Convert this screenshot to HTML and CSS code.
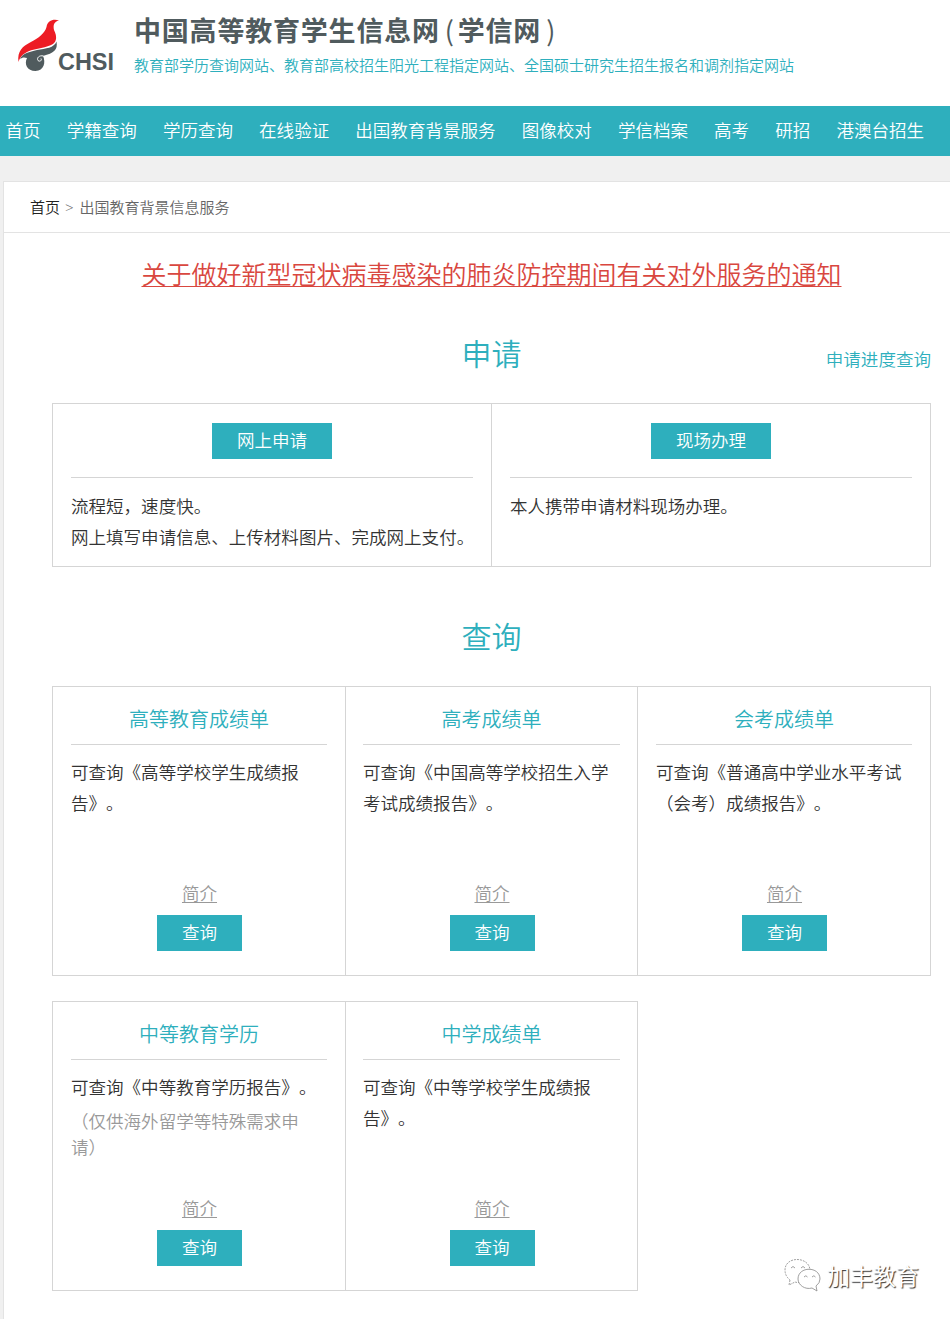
FILE: index.html
```html
<!DOCTYPE html>
<html lang="zh-CN">
<head>
<meta charset="UTF-8">
<meta name="viewport" content="width=device-width, initial-scale=1.0">
<title>出国教育背景信息服务</title>
<link rel="stylesheet" href="styles.css">
</head>
<body>
  <header class="header">
    <svg class="logo" width="102" height="58" viewBox="0 0 102 58">
      <path d="M1.5 44 C0 33 6 28 13 24.5 C22 20 28 15 29.5 9 C30.5 3 36 0.500 42 2.500 C37 3.500 36 7 37 12 C40 18 40 23 36 26 C30 30 19 30 11 33.5 C6 36 3 39 1.5 44Z" fill="#ed1c24"/>
      <path d="M39.5 23.5 C41 32 37 35 26 38 C29 44 27 53 18.5 53 C10 53 7 46 10 40 C7 39 5 39.500 3 41 C6 35 12 34 20 32 C29 30.500 37 30 39.5 23.5Z" fill="#505b5e"/>
      <path d="M26.500 38 C22 37 19.500 40 21 42.500 C23 44 25 42.500 24 40.500" fill="none" stroke="#fff" stroke-width="1"/>
      <text x="41" y="52" class="logo-text" textLength="56" lengthAdjust="spacingAndGlyphs">CHSI</text>
    </svg>
    <div class="site-name">
      <h1>中国高等教育学生信息网<span class="paren-left">(</span>学信网<span class="paren-right">)</span></h1>
      <p>教育部学历查询网站、教育部高校招生阳光工程指定网站、全国硕士研究生招生报名和调剂指定网站</p>
    </div>
  </header>

  <nav class="nav">
    <a>首页</a>
    <a>学籍查询</a>
    <a>学历查询</a>
    <a>在线验证</a>
    <a>出国教育背景服务</a>
    <a>图像校对</a>
    <a>学信档案</a>
    <a>高考</a>
    <a>研招</a>
    <a>港澳台招生</a>
  </nav>

  <main class="main">
    <div class="breadcrumb"><a>首页</a><span class="arrow">&gt;</span><span>出国教育背景信息服务</span></div>

    <div class="content">
      <a class="notice">关于做好新型冠状病毒感染的肺炎防控期间有关对外服务的通知</a>

      <div class="section-title">
        <h2>申请</h2>
        <a class="progress">申请进度查询</a>
      </div>
      <div class="grid apply">
        <div class="card">
          <div class="card-head"><a class="btn btn-wide">网上申请</a></div>
          <p>流程短，速度快。<br>网上填写申请信息、上传材料图片、完成网上支付。</p>
        </div>
        <div class="card">
          <div class="card-head"><a class="btn btn-wide">现场办理</a></div>
          <p>本人携带申请材料现场办理。</p>
        </div>
      </div>

      <div class="section-title query-title">
        <h2>查询</h2>
      </div>
      <div class="grid query">
        <div class="card">
          <h3>高等教育成绩单</h3>
          <p>可查询《高等学校学生成绩报告》。</p>
          <div class="card-foot"><a class="intro">简介</a><a class="btn">查询</a></div>
        </div>
        <div class="card">
          <h3>高考成绩单</h3>
          <p>可查询《中国高等学校招生入学考试成绩报告》。</p>
          <div class="card-foot"><a class="intro">简介</a><a class="btn">查询</a></div>
        </div>
        <div class="card">
          <h3>会考成绩单</h3>
          <p>可查询《普通高中学业水平考试（会考）成绩报告》。</p>
          <div class="card-foot"><a class="intro">简介</a><a class="btn">查询</a></div>
        </div>
      </div>
      <div class="grid query query-two">
        <div class="card">
          <h3>中等教育学历</h3>
          <p>可查询《中等教育学历报告》。</p>
          <p class="tip">（仅供海外留学等特殊需求申请）</p>
          <div class="card-foot"><a class="intro">简介</a><a class="btn">查询</a></div>
        </div>
        <div class="card">
          <h3>中学成绩单</h3>
          <p>可查询《中等学校学生成绩报告》。</p>
          <div class="card-foot"><a class="intro">简介</a><a class="btn">查询</a></div>
        </div>
      </div>
    </div>
  </main>

  <div class="watermark">
    <svg width="38" height="34" viewBox="0 0 38 34" fill="#fff" stroke="#888" stroke-width="0.8">
      <path d="M6 22 L5 27 L11 24 C16 26 27 23 26 12 C25 -2 1 -2 1 12 Q1 18 6 22Z" stroke-dasharray="2 1"/>
      <path d="M32 28 L33 33 L28 30 C21 32 14 27 14 21 C14 8 36 8 36 21 Q36 25 32 28Z"/>
      <path d="M7 10 q2 -3 4 0 M17 10 q2 -3 4 0 M20 19 q2 -2.5 3.5 0 M28 19 q2 -2.5 3.5 0" fill="none"/>
    </svg>
    <span>加丰教育</span>
  </div>
</body>
</html>
```
FILE: styles.css
```css
* {
  box-sizing: border-box;
}

body {
  margin: 0;
  height: 1319px;
  position: relative;
  overflow: hidden;
  display: flex;
  flex-direction: column;
  background-color: #f0f0f0;
  font-family: "Noto Sans CJK SC", sans-serif;
  font-size: 17.55px;
  font-weight: 350;
  color: #333;
  text-spacing-trim: space-all;
}

h1, h2, h3, p {
  margin: 0;
  font-weight: 350;
}

.header {
  height: 106px;
  flex: none;
  display: flex;
  background-color: #fff;
}

.logo {
  margin: 18px 15px 0 17px;
}

.logo-text {
  font-family: "Liberation Sans", sans-serif;
  font-size: 24px;
  font-weight: bold;
  fill: #505b5e;
}

.site-name h1 {
  margin-top: 12px;
  height: 36px;
  line-height: 36px;
  font-size: 27px;
  font-weight: 700;
  letter-spacing: 0.8px;
  color: #505b5e;
  white-space: nowrap;
}

.paren-left {
  margin: 0 3px 0 5px;
  font-weight: 400;
}

.paren-right {
  margin-left: 5px;
  font-weight: 400;
}

.site-name p {
  font-size: 15px;
  line-height: 34px;
  color: #2eafbd;
  white-space: nowrap;
}

.nav {
  height: 50px;
  flex: none;
  display: flex;
  gap: 26.1px;
  padding-left: 5.5px;
  background-color: #2eafbd;
  color: #fff;
  line-height: 47px;
  white-space: nowrap;
}

.main {
  flex: 1;
  margin: 25px 0 0 3px;
  border: 1px solid #e3e3e3;
  border-width: 1px 0 0 1px;
  background-color: #fff;
}

.breadcrumb {
  height: 51px;
  padding-left: 26px;
  border-bottom: 1px solid #e3e3e3;
  font-size: 15px;
  line-height: 49px;
  color: #666;
}

.breadcrumb a {
  color: #222;
}

.arrow {
  margin: 0 6px 0 5px;
  font-family: "Open Sans", sans-serif;
}

.content {
  padding: 0 19px 0 48px;
}

.notice {
  display: block;
  height: 85px;
  line-height: 80px;
  font-size: 25px;
  text-align: center;
  text-decoration: underline;
  text-decoration-thickness: 1px;
  text-underline-offset: 2px;
  color: #d9473f;
}

.section-title {
  display: grid;
  grid-template-columns: 1fr auto 1fr;
  height: 85px;
  line-height: 68px;
  color: #2eafbd;
}

.section-title h2 {
  grid-column: 2;
  font-size: 30px;
}

.progress {
  text-align: right;
  line-height: 82px;
}

.query-title {
  margin-top: 34px;
}

.grid {
  display: grid;
  width: 879px;
  border: 1px solid #d5d5d5;
}

.card {
  padding: 0 18px;
  border-left: 1px solid #d5d5d5;
  display: flex;
  flex-direction: column;
}

.card:first-child {
  border-left: none;
}

.card p {
  line-height: 31px;
}

.apply {
  grid-template-columns: 438px 1fr;
  height: 164px;
}

.apply p {
  white-space: nowrap;
}

.card-head {
  height: 74px;
  margin-bottom: 12px;
  padding-top: 19px;
  border-bottom: 1px solid #d5d5d5;
  text-align: center;
}

.btn {
  display: inline-block;
  width: 85px;
  height: 36px;
  line-height: 34px;
  background-color: #2eafbd;
  color: #fff;
  text-align: center;
}

.btn-wide {
  width: 120px;
}

.query {
  grid-template-columns: 292px 292px 1fr;
  height: 290px;
}

.query .card {
  padding: 0 17px 24px;
}

.query .card:first-child,
.query .card:nth-child(3) {
  padding: 0 18px 24px;
}

.query-two {
  grid-template-columns: 292px 1fr;
  width: 586px;
  margin-top: 25px;
}

.card h3 {
  height: 58px;
  margin-bottom: 11px;
  border-bottom: 1px solid #d5d5d5;
  font-size: 20px;
  line-height: 63px;
  text-align: center;
  color: #2eafbd;
}

.card .tip {
  margin-top: 6px;
  line-height: 26px;
  color: #999;
}

.card-foot {
  margin-top: auto;
  padding-left: 1px;
  display: flex;
  flex-direction: column;
  align-items: center;
}

.intro {
  height: 36px;
  line-height: 28px;
  color: #999;
  text-decoration: underline;
  text-decoration-thickness: 1px;
  text-underline-offset: 2px;
}

/* sits over the lower right corner of the page */
.watermark {
  position: absolute;
  right: 31px;
  bottom: 24px;
  display: flex;
  align-items: center;
  gap: 5px;
  font-size: 23px;
  line-height: 40px;
  font-weight: 400;
  color: #fff;
  text-shadow: 1px 1px 1px #333;
}
```
